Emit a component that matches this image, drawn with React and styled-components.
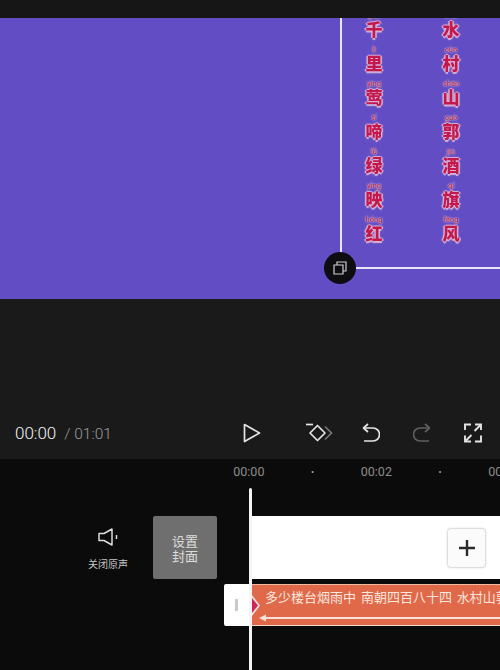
import styled, { createGlobalStyle } from "styled-components";

const CJK = `"Noto Sans CJK SC", "Liberation Sans", sans-serif`;

const LYRICS = [
	[['qiān', '千'], ['lǐ', '里'], ['yīng', '莺'], ['tí', '啼'], ['lǜ', '绿'], ['yìng', '映'], ['hóng', '红']],
	[['shuǐ', '水'], ['cūn', '村'], ['shān', '山'], ['guō', '郭'], ['jiǔ', '酒'], ['qí', '旗'], ['fēng', '风']],
];

const RULER = ['00:00', '•', '00:02', '•', '00:04'];

const GlobalStyle = createGlobalStyle`
	html, body {
		margin: 0;
		padding: 0;
		background: #0b0b0b;
	}
	body {
		font-family: Roboto, "Liberation Sans", sans-serif;
	}
`;

const Page = styled.div`
	width: 500px;
	height: 670px;
	display: flex;
	flex-direction: column;
	overflow: hidden;
	position: relative;
`;

const TopBar = styled.div`
	height: 18px;
	background: #161616;
`;

const Preview = styled.div`
	height: 281px;
	background: #634dc4;
	position: relative;
	overflow: hidden;
`;

const Frame = styled.div`
	position: absolute;
	left: 340px;
	top: 0;
	right: -4px;
	bottom: 30px;
	border-left: 2px solid #e9e6f5;
	border-bottom: 2px solid #e9e6f5;
	display: flex;
	gap: 43px;
	padding-left: 15px;
`;

const LyricColumn = styled.div`
	width: 34px;
	margin-top: -6px;
	display: flex;
	flex-direction: column;
	align-items: center;
`;

const LyricCell = styled.div`
	height: 34px;
	display: flex;
	flex-direction: column;
	align-items: center;
	color: #c4184c;
	filter: blur(0.5px);
`;

const Pinyin = styled.span`
	font-size: 7.5px;
	font-weight: 500;
	line-height: 8px;
	color: #a82a55;
	text-shadow: 0 0 2px #ecd2e4, 0 0 1px #ecd2e4;
`;

const Hanzi = styled.span`
	font-family: ${CJK};
	font-size: 17px;
	font-weight: 900;
	line-height: 17px;
	text-shadow: 1.5px 0 1px #d9b4d6, -1.5px 0 1px #d9b4d6, 0 1.5px 1px #d9b4d6, 0 -1.5px 1px #d9b4d6;
`;

const CopyBadge = styled.div`
	position: absolute;
	left: 324px;
	top: 234px;
	width: 32px;
	height: 32px;
	border-radius: 50%;
	background: #0d0d12;
	display: flex;
	align-items: center;
	justify-content: center;
`;

const Stage = styled.div`
	height: 160px;
	background: #1a1a1a;
	display: flex;
	flex-direction: column;
	justify-content: flex-end;
`;

const Toolbar = styled.div`
	height: 40px;
	display: flex;
	align-items: flex-start;
	padding-left: 15px;
`;

const Clock = styled.div`
	flex: 0 0 228px;
	height: 28px;
	font-size: 17px;
	font-weight: 300;
	line-height: 28px;
	color: #f4f4f4;
	white-space: nowrap;
`;

const ClockTotal = styled.span`
	font-size: 15.5px;
	color: #9a9a9a;
	margin-left: 8px;
`;

const Control = styled.div`
	margin-left: ${(p) => p.$gap || 0}px;
	height: 28px;
	display: flex;
	align-items: center;
`;

const Timeline = styled.div`
	flex: 1;
	background: #0b0b0b;
	position: relative;
	overflow: hidden;
`;

const Ruler = styled.div`
	height: 25px;
	padding-left: 217px;
	display: flex;
	align-items: center;
`;

const RulerTick = styled.span`
	flex: 0 0 63.75px;
	text-align: center;
	font-size: ${(p) => (p.$dot ? 9 : 12.5)}px;
	color: ${(p) => (p.$dot ? '#a8a8a8' : '#8c8c8c')};
`;

const TrackArea = styled.div`
	margin-top: 32px;
	display: flex;
	align-items: flex-start;
`;

const MuteToggle = styled.div`
	flex: 0 0 90px;
	margin-left: 63px;
	padding-top: 12px;
	display: flex;
	flex-direction: column;
	align-items: center;
`;

const MuteLabel = styled.span`
	font-family: ${CJK};
	font-size: 10px;
	line-height: 14px;
	margin-top: 11px;
	color: #c4c4c4;
`;

const CoverButton = styled.div`
	flex: 0 0 64px;
	height: 63px;
	border-radius: 2px;
	background: #6f6f6f;
	color: #dcdcdc;
	font-family: ${CJK};
	font-size: 13px;
	line-height: 15px;
	display: flex;
	align-items: center;
	justify-content: center;
	text-align: center;
`;

const Tracks = styled.div`
	flex: 1;
	min-width: 0;
	margin-left: 7px;
	display: flex;
	flex-direction: column;
	gap: 5px;
`;

const CoverTrack = styled.div`
	height: 63px;
	margin-left: 28px;
	background: #fff;
	display: flex;
	align-items: center;
	justify-content: flex-end;
	padding-right: 14px;
`;

const AddButton = styled.div`
	width: 37px;
	height: 38px;
	border: 1px solid #dedede;
	border-radius: 4px;
	background: #fbfbfb;
	box-shadow: 0 0 2px #d8d8d8;
	display: flex;
	align-items: center;
	justify-content: center;
`;

const AudioRow = styled.div`
	height: 42px;
	display: flex;
`;

const TrimHandle = styled.div`
	flex: 0 0 26px;
	margin-right: 2px;
	background: #fff;
	border-radius: 2px 0 0 2px;
	display: flex;
	align-items: center;
	justify-content: center;
	padding-right: 2px;
	box-sizing: border-box;
`;

const TrimGrip = styled.div`
	width: 3px;
	height: 12px;
	background: #c9c9c9;
`;

const AudioClip = styled.div`
	flex: 1;
	min-width: 0;
	background: #e0694a;
	border-top: 1px solid #f0b9a5;
	border-bottom: 1px solid #f6d8cb;
	position: relative;
	overflow: hidden;
	display: flex;
	flex-direction: column;
	box-sizing: border-box;
`;

const ClipText = styled.div`
	margin: 4px 0 0 13px;
	font-family: ${CJK};
	font-size: 13px;
	line-height: 15px;
	word-spacing: 2px;
	color: #f9e6de;
	white-space: nowrap;
`;

const ClipArrow = styled.svg`
	margin: 10px 0 0 7px;
	display: block;
	flex: none;
`;

const KeyMark = styled.div`
	position: absolute;
	left: 0;
	top: 10px;
	width: 8px;
	height: 21px;
	background: #f8e4e0;
	clip-path: polygon(0 0, 100% 50%, 0 100%);

	&::after {
		content: "";
		position: absolute;
		left: 0;
		top: 3px;
		width: 6px;
		height: 15px;
		background: #cf2456;
		clip-path: polygon(0 0, 100% 50%, 0 100%);
	}
`;

const Playhead = styled.div`
	position: absolute;
	left: 249px;
	top: 29px;
	bottom: 0;
	width: 3px;
	border-radius: 2px 2px 0 0;
	background: #f4f4f4;
`;

function LyricsColumn({ cells }) {
	return (
		<LyricColumn>
			{cells.map(([pinyin, hanzi]) => (
				<LyricCell key={hanzi}>
					<Pinyin>{pinyin}</Pinyin>
					<Hanzi>{hanzi}</Hanzi>
				</LyricCell>
			))}
		</LyricColumn>
	);
}

function Icon({ w = 18, h = 20, color = '#e4e4e4', sw = 1.7, children }) {
	return (
		<svg width={w} height={h} viewBox={`0 0 ${w} ${h}`} fill="none" stroke={color} strokeWidth={sw}>
			{children}
		</svg>
	);
}

export default function App() {
	return (
		<Page>
			<GlobalStyle />
			<TopBar />
			<Preview>
				<Frame>
					{LYRICS.map((cells) => <LyricsColumn key={cells[0][1]} cells={cells} />)}
				</Frame>
				<CopyBadge>
					<Icon w={14} h={14} color="#cfcfcf" sw={1.2}>
						<path d="M1 4h9v9H1z" />
						<path d="M4 4V1h9v9h-3" />
					</Icon>
				</CopyBadge>
			</Preview>
			<Stage>
				<Toolbar>
					<Clock>00:00<ClockTotal>/ 01:01</ClockTotal></Clock>
					<Control>
						<Icon>
							<path d="M1.5 1.5L16.5 10 1.5 18.5z" strokeLinejoin="round" />
						</Icon>
					</Control>
					<Control $gap={44}>
						<Icon w={28}>
							<path d="M1 1.5h7" />
							<path d="M12.5 2.5l7.5 7.5-7.5 7.5L5 10z" strokeLinejoin="round" />
							<path d="M20 3.5l6.5 6.5-6.5 6.5" stroke="#767676" />
						</Icon>
					</Control>
					<Control $gap={29}>
						<Icon>
							<path d="M6 1L1.5 5 6 9" strokeLinejoin="round" />
							<path d="M1.5 5H11a6.5 6.5 0 0 1 0 13H2" />
						</Icon>
					</Control>
					<Control $gap={33}>
						<Icon color="#5f5f5f">
							<path d="M12 1l4.5 4L12 9" strokeLinejoin="round" />
							<path d="M16.5 5H7a6.5 6.5 0 0 0 0 13h9" />
						</Icon>
					</Control>
					<Control $gap={33}>
						<Icon sw={1.9}>
							<path d="M1 7V1.5h6M11 1.5h6V7M17 12.5v6h-6M7 18.5H1v-6" />
							<path d="M16.5 2l-6 6M1.5 18l6-6" />
						</Icon>
					</Control>
				</Toolbar>
			</Stage>
			<Timeline>
				<Ruler>
					{RULER.map((tick, i) => <RulerTick key={i} $dot={tick === '•'}>{tick}</RulerTick>)}
				</Ruler>
				<TrackArea>
					<MuteToggle>
						<Icon w={20} h={18} color="#dcdcdc" sw={1.5}>
							<path d="M1 5.5h5L14 1v16l-8-4.5H1z" strokeLinejoin="round" />
							<path d="M18.5 7v4" />
						</Icon>
						<MuteLabel>关闭原声</MuteLabel>
					</MuteToggle>
					<CoverButton>设置<br />封面</CoverButton>
					<Tracks>
						<CoverTrack>
							<AddButton>
								<Icon w={16} h={16} color="#2a2a2a" sw={2.4}>
									<path d="M8 0v16M0 8h16" />
								</Icon>
							</AddButton>
						</CoverTrack>
						<AudioRow>
							<TrimHandle><TrimGrip /></TrimHandle>
							<AudioClip>
								<KeyMark />
								<ClipText>多少楼台烟雨中 南朝四百八十四 水村山郭</ClipText>
								<ClipArrow width="241" height="8" viewBox="0 0 241 8">
									<path d="M0 4l7-3.5v2.5h234v2H7v2.5z" fill="#f8e2d8" />
								</ClipArrow>
							</AudioClip>
						</AudioRow>
					</Tracks>
				</TrackArea>
				<Playhead />
			</Timeline>
		</Page>
	);
}
